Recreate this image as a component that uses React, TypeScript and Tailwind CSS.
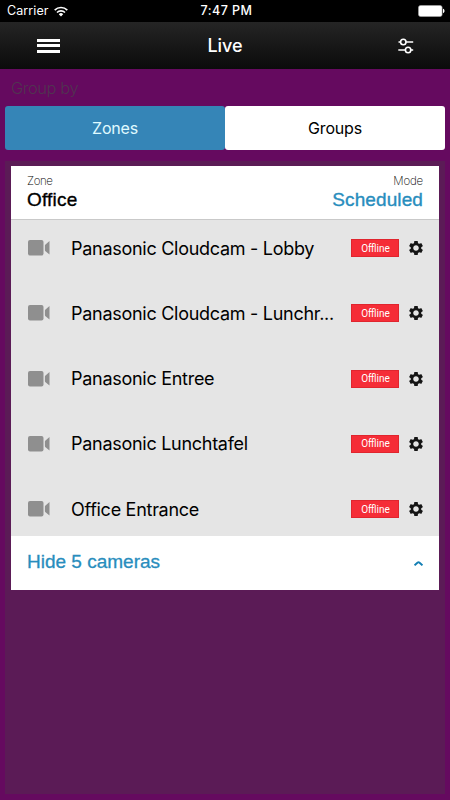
const cameras = [
  { id: "1", name: "Panasonic Cloudcam - Lobby", status: "Offline" },
  { id: "2", name: "Panasonic Cloudcam - Lunchr...", status: "Offline" },
  { id: "3", name: "Panasonic Entree", status: "Offline" },
  { id: "4", name: "Panasonic Lunchtafel", status: "Offline" },
  { id: "5", name: "Office Entrance", status: "Offline" },
];

function WifiIcon() {
  return (
    <svg width="14" height="11" viewBox="0 0 14 11" fill="none" stroke="white" strokeWidth="1.6">
      <path d="M.7 4.1a9 9 0 0 1 12.6 0" />
      <path d="M3 6.5a5.7 5.7 0 0 1 8 0" />
      <path d="M7 10.4 4.8 8.2a3.1 3.1 0 0 1 4.4 0Z" fill="white" stroke="none" />
    </svg>
  );
}

function BatteryIcon() {
  return (
    <svg width="27" height="12" viewBox="0 0 27 12">
      <rect x=".5" y=".5" width="23.6" height="11" rx="2" fill="white" stroke="#aaa" strokeWidth=".6" />
      <path d="M25 3.8c2 .6 2 3.8 0 4.4Z" fill="white" />
    </svg>
  );
}

function SlidersIcon() {
  return (
    <svg width="16" height="16" viewBox="0 0 16 16" fill="none" stroke="white" strokeWidth="1.6">
      <path d="M.5 4h2.3M8 4h7.2M.3 12h7.2M12.7 12h2.5" />
      <circle cx="5.3" cy="4" r="2.7" />
      <circle cx="10.1" cy="12" r="2.7" />
    </svg>
  );
}

function CameraIcon() {
  return (
    <svg width="22" height="16" viewBox="0 0 22 16" fill="#8f8f8f">
      <rect x="0" y="0" width="15.5" height="15.5" rx="2" />
      <path d="M21.5 1v13.6l-4-3.4a1.6 1.6 0 0 1-.6-1.2V5.6a1.6 1.6 0 0 1 .6-1.2Z" />
    </svg>
  );
}

function GearIcon() {
  return (
    <svg width="14" height="14" viewBox="2 2 20 20" fill="#151515">
      <path d="M19.43 12.98c.04-.32.07-.64.07-.98s-.03-.66-.07-.98l2.11-1.65c.19-.15.24-.42.12-.64l-2-3.46c-.12-.22-.39-.3-.61-.22l-2.49 1c-.52-.4-1.08-.73-1.69-.98l-.38-2.65C14.46 2.18 14.25 2 14 2h-4c-.25 0-.46.18-.49.42l-.38 2.65c-.61.25-1.17.59-1.69.98l-2.49-1c-.23-.09-.49 0-.61.22l-2 3.46c-.13.22-.07.49.12.64l2.11 1.65c-.04.32-.07.65-.07.98s.03.66.07.98l-2.11 1.65c-.19.15-.24.42-.12.64l2 3.46c.12.22.39.3.61.22l2.49-1c.52.4 1.08.73 1.69.98l.38 2.65c.03.24.24.42.49.42h4c.25 0 .46-.18.49-.42l.38-2.65c.61-.25 1.17-.59 1.69-.98l2.49 1c.23.09.49 0 .61-.22l2-3.46c.12-.22.07-.49-.12-.64l-2.11-1.65zM12 16c-2.2 0-4-1.8-4-4s1.8-4 4-4 4 1.8 4 4-1.8 4-4 4z" />
    </svg>
  );
}

export default function App() {
  return (
    <div className="flex h-[800px] w-[450px] flex-col overflow-hidden bg-[#650a5f] font-['Inter',sans-serif]">
      {/* Status bar */}
      <div className="grid h-[22px] shrink-0 grid-cols-3 items-center bg-black pr-[5px] pl-[7px] text-white">
        <div className="flex items-center gap-[5px]">
          <span className="text-[12.5px] tracking-[0.1px]">Carrier</span>
          <WifiIcon />
        </div>
        <span className="pl-px text-center text-[12.5px] font-medium tracking-[0.45px]">7:47 PM</span>
        <div className="flex justify-end">
          <BatteryIcon />
        </div>
      </div>

      {/* Navigation bar */}
      <header className="grid h-[47px] shrink-0 grid-cols-3 items-center bg-linear-to-b from-[#252525] to-[#0b0b0b] pr-[36px] pl-[37px] text-white">
        <button className="flex w-[23px] flex-col gap-[2.5px]">
          <span className="h-[3px] bg-white" />
          <span className="h-[3px] bg-white" />
          <span className="h-[3px] bg-white" />
        </button>
        <h1 className="pr-px text-center text-[18px] font-medium tracking-[-0.1px]">Live</h1>
        <button className="flex justify-end">
          <SlidersIcon />
        </button>
      </header>

      <div className="flex h-[37px] shrink-0 items-center pt-0.5 pl-[11px] text-[16.5px] font-light tracking-[-0.45px] text-[#513451]">
        Group by
      </div>

      <div className="mx-[5px] flex h-11 shrink-0 text-[16px] tracking-[-0.2px]">
        <button className="flex-1 rounded-[3px] bg-[#3585b7] text-[#e0fbff]">Zones</button>
        <button className="flex-1 rounded-[3px] bg-white text-black">Groups</button>
      </div>

      <main className="mx-[5px] mt-[11px] mb-[6px] flex-1 bg-[#5b1b56] px-[6px] pt-[5px]">
        <section className="flex h-[424px] flex-col bg-white">
          <div className="flex h-[54px] shrink-0 justify-between border-b border-[#c9c9c9] px-4 pt-[9px]">
            <div>
              <p className="text-[11.5px] leading-[13px] font-extralight tracking-[-0.4px] text-black">Zone</p>
              <p className="font-['Liberation_Sans',sans-serif] text-[19px] leading-6 tracking-[0.2px] text-black [-webkit-text-stroke:0.35px_black]">
                Office
              </p>
            </div>
            <div className="text-right">
              <p className="text-[11.5px] leading-[13px] font-extralight tracking-[-0.2px] text-black">Mode</p>
              <p className="font-['Liberation_Sans',sans-serif] text-[19px] leading-6 tracking-[0.1px] text-[#288dbd] [-webkit-text-stroke:0.35px_#288dbd]">
                Scheduled
              </p>
            </div>
          </div>

          <ul className="flex h-[316px] shrink-0 flex-col justify-between bg-[#e5e5e5] pt-px">
            {cameras.map((camera) => (
              <li key={camera.id} className="flex h-[54px] items-center pr-[16px] pl-[17px]">
                <CameraIcon />
                <span className="ml-[21px] w-[270px] text-[18px] tracking-[-0.28px] whitespace-nowrap text-black">
                  {camera.name}
                </span>
                <span className="ml-[10px] flex h-[18px] w-12 shrink-0 items-center justify-center border border-[#e0252e] bg-[#f52d37] pl-px font-['Roboto',sans-serif] text-[10px] text-white">
                  {camera.status}
                </span>
                <span className="ml-auto">
                  <GearIcon />
                </span>
              </li>
            ))}
          </ul>

          <button className="flex flex-1 items-center justify-between px-4 pb-0.5 font-['Liberation_Sans',sans-serif] text-[19px] text-[#288dbd] [-webkit-text-stroke:0.3px_#288dbd]">
            Hide 5 cameras
            <svg className="mt-0.5" width="9" height="5" viewBox="0 0 9 5" fill="none" stroke="#137fb4" strokeWidth="2">
              <path d="M.5 4.3 3.7 1.5q.8-.6 1.6 0L8.5 4.3" />
            </svg>
          </button>
        </section>
      </main>
    </div>
  );
}
